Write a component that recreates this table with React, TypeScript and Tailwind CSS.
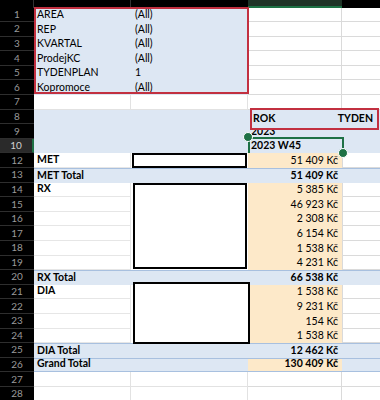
import React from "react";

type Kind = "filter" | "blank" | "head" | "item" | "total" | "grand";

type Row = {
  n: number;
  kind: Kind;
  a?: string;
  b?: string;
  c?: string;
};

const rows: Row[] = [
  { n: 1, kind: "filter", a: "AREA", b: "(All)" },
  { n: 2, kind: "filter", a: "REP", b: "(All)" },
  { n: 3, kind: "filter", a: "KVARTAL", b: "(All)" },
  { n: 4, kind: "filter", a: "ProdejKC", b: "(All)" },
  { n: 5, kind: "filter", a: "TYDENPLAN", b: "1" },
  { n: 6, kind: "filter", a: "Kopromoce", b: "(All)" },
  { n: 7, kind: "blank" },
  { n: 8, kind: "head" },
  { n: 9, kind: "head", c: "2023" },
  { n: 10, kind: "head", c: "2023 W45" },
  { n: 12, kind: "item", a: "MET", c: "51 409 Kč" },
  { n: 13, kind: "total", a: "MET Total", c: "51 409 Kč" },
  { n: 14, kind: "item", a: "RX", c: "5 385 Kč" },
  { n: 15, kind: "item", c: "46 923 Kč" },
  { n: 16, kind: "item", c: "2 308 Kč" },
  { n: 17, kind: "item", c: "6 154 Kč" },
  { n: 18, kind: "item", c: "1 538 Kč" },
  { n: 19, kind: "item", c: "4 231 Kč" },
  { n: 20, kind: "total", a: "RX Total", c: "66 538 Kč" },
  { n: 21, kind: "item", a: "DIA", c: "1 538 Kč" },
  { n: 22, kind: "item", c: "9 231 Kč" },
  { n: 23, kind: "item", c: "154 Kč" },
  { n: 24, kind: "item", c: "1 538 Kč" },
  { n: 25, kind: "total", a: "DIA Total", c: "12 462 Kč" },
  { n: 26, kind: "grand", a: "Grand Total", c: "130 409 Kč" },
  { n: 27, kind: "blank" },
  { n: 28, kind: "blank" },
];

const cell = "h-full flex items-end pb-[2px] leading-[11px] whitespace-nowrap";

function cellClasses(kind: Kind) {
  // returns [A, B, C, D] class strings
  switch (kind) {
    case "filter":
      return [
        "bg-[#dde7f3]",
        "bg-[#dde7f3]",
        "bg-white border-b border-r border-[#dadada]",
        "bg-white border-b border-[#dadada]",
      ];
    case "blank":
      return [
        "bg-white border-b border-r border-[#e2e2e2]",
        "bg-white border-b border-r border-[#e2e2e2]",
        "bg-white border-b border-r border-[#dadada]",
        "bg-white border-b border-[#dadada]",
      ];
    case "head":
      return ["bg-[#dde7f3]", "bg-[#dde7f3]", "bg-[#dde7f3]", "bg-[#dde7f3]"];
    case "item":
      return [
        "bg-white border-b border-r border-[#e6e6e6] font-bold",
        "bg-white",
        "bg-[#fde9c9] justify-end pr-[4px]",
        "bg-white border-b border-l border-[#dadada]",
      ];
    case "total":
      return [
        "bg-[#dde7f3] border-t border-[#a8c0df] font-bold",
        "bg-[#dde7f3] border-t border-[#a8c0df]",
        "bg-[#dde7f3] border-t border-[#a8c0df] justify-end pr-[4px] font-bold",
        "bg-[#dde7f3] border-t border-[#a8c0df]",
      ];
    case "grand":
      return [
        "bg-[#dde7f3] border-t border-b border-[#a8c0df] font-bold",
        "bg-[#dde7f3] border-t border-b border-[#a8c0df]",
        "bg-[#fde9c9] border-t border-b border-[#a8c0df] justify-end pr-[4px] font-bold",
        "bg-[#dde7f3] border-t border-b border-[#a8c0df]",
      ];
  }
}

function SheetRow({ row }: { row: Row }) {
  const [a, b, c, d] = cellClasses(row.kind);
  const selected = row.n === 10;
  return (
    <div className="flex h-[14.6px]">
      <div
        className={`w-[34px] h-full flex items-center justify-center text-[10px] border-b border-[#2e2e2e] ${
          selected ? "bg-[#2a2a2a] text-[#d0d0d0] border-r-2 border-r-[#1e7145]" : "bg-black text-[#9a9a9a]"
        }`}
      >
        {row.n}
      </div>
      <div className={`w-[97px] pl-[3px] ${cell} ${a}`}>{row.a}</div>
      <div className={`w-[117px] pl-[4px] ${cell} ${b}`}>{row.b}</div>
      <div className={`w-[94px] pl-[3px] ${cell} ${c} ${row.kind === "head" ? "font-bold" : ""}`}>
        {row.c}
      </div>
      <div className={`w-[38px] ${cell} ${d}`} />
    </div>
  );
}

export default function App() {
  return (
    <div
      className="relative w-[380px] h-[400px] overflow-hidden bg-white text-[10.5px] text-black"
      style={{ fontFamily: "Lato, 'Liberation Sans', sans-serif" }}
    >
      {/* column header strip */}
      <div className="flex h-[7.5px] bg-black">
        <div className="w-[34px] border-r border-[#333]" />
        <div className="w-[97px] border-r border-[#333]" />
        <div className="w-[117px]" />
        <div className="w-[94px] bg-[#1f3327] border-b-2 border-[#1e7145]" />
        <div className="w-[38px]" />
      </div>

      {rows.map((r) => (
        <SheetRow key={r.n} row={r} />
      ))}

      {/* filter area frame */}
      <div className="absolute left-[34px] top-[7px] w-[215px] h-[87px] border-2 border-[#c23040]" />

      {/* column labels frame */}
      <div className="absolute left-[250px] top-[108px] w-[129px] h-[22px] border-2 border-[#c23040] bg-[#dde7f3] flex items-center justify-between pl-[1px] pr-[4px] font-bold">
        <span>ROK</span>
        <span>TYDEN</span>
      </div>

      {/* white shapes over column B */}
      <div className="absolute left-[132px] top-[153px] w-[115px] h-[15px] border-2 border-black bg-white" />
      <div className="absolute left-[133px] top-[183px] w-[114px] h-[86px] border-2 border-black bg-white" />
      <div className="absolute left-[133px] top-[282px] w-[117px] h-[62px] border-2 border-black bg-white" />

      {/* selection */}
      <div className="absolute left-[248px] top-[137px] w-[96px] h-[16px] border-l-2 border-t-2 border-r-2 border-[#1e7145]" />
      <div className="absolute left-[243px] top-[132px] w-[10px] h-[10px] rounded-full bg-[#1e7145] border border-white" />
      <div className="absolute left-[338px] top-[148px] w-[10px] h-[10px] rounded-full bg-[#1e7145] border border-white" />
    </div>
  );
}
